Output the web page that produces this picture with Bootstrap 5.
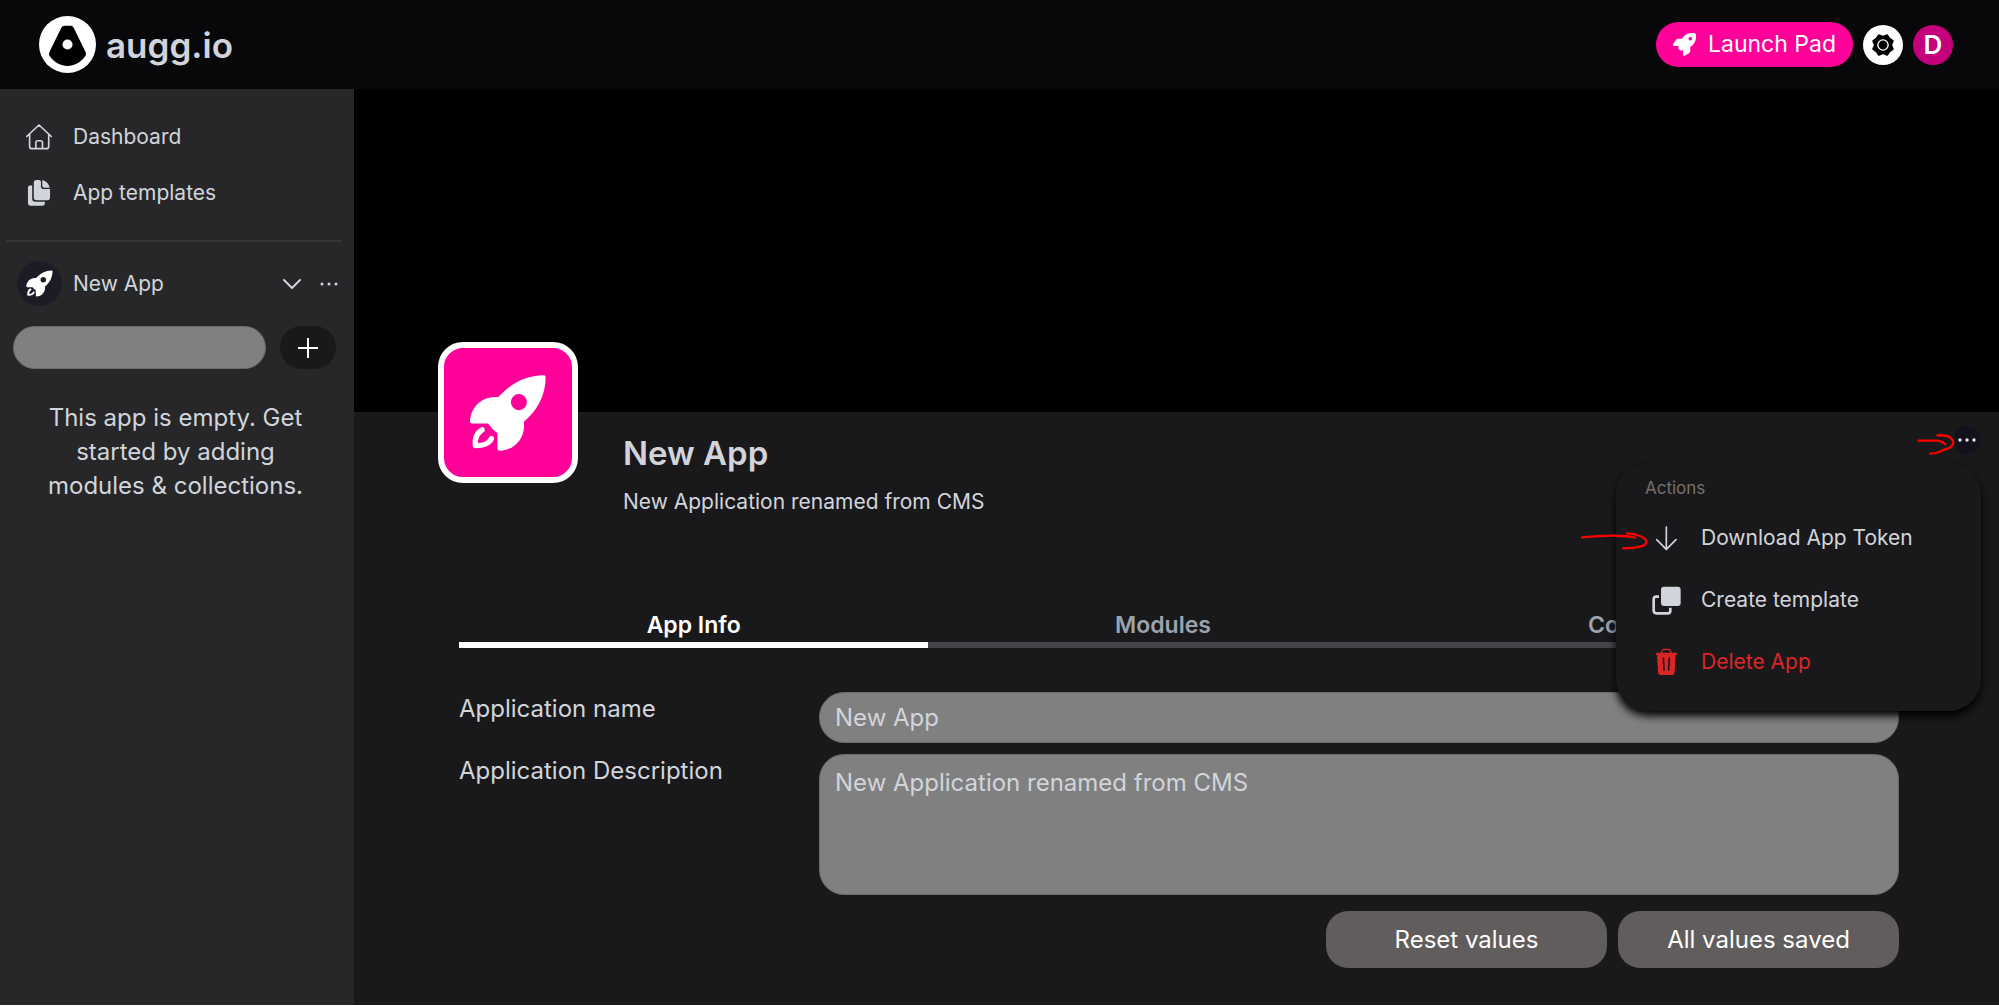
<!DOCTYPE html>
<html lang="en">
<head>
<meta charset="utf-8">
<meta name="viewport" content="width=device-width, initial-scale=1">
<title>augg.io – New App</title>
<link href="https://cdn.jsdelivr.net/npm/bootstrap@5.3.0/dist/css/bootstrap.min.css" rel="stylesheet">
<style>
  body { background: #19191b; color: #d1d5db; font-family: Inter, "Open Sans", sans-serif; font-size: 21px; line-height: 34px; border-bottom: 1px solid #fff; }
  svg { display: block; flex: none; }
  button { color: inherit; }
  .topbar { background: #08080a; height: 89px; padding: 0 46px 0 39px; }
  .brand { gap: 10px; }
  .brand-name { font-size: 35px; font-weight: 600; color: #d1d5db; }
  .top-actions { gap: 10px; }
  .launch { background: #ff0099; color: #fff; height: 45px; padding: 0 16px; gap: 12px; font-size: 23px; }
  .launch:hover { background: #e0008a; color: #fff; }
  .round-btn { width: 40px; height: 40px; }
  .avatar { background: #c4007a; font-size: 26px; font-weight: 600; }

  .sidebar { width: 354px; background: #272729; padding: 20px 12px 0 13px; }
  .side-link { height: 56px; padding-left: 13px; gap: 21px; color: #d1d5db; }
  .side-rule { height: 2px; background: #353537; margin: 19px 0 19px -7px; }
  .app-row { height: 45px; padding: 0 4px 0 4px; gap: 11px; }
  .app-dot { width: 45px; height: 45px; background: #1d1b26; }
  .search-row { gap: 14px; margin-top: 20px; padding-right: 6px; }
  .pill-input { background: #808080; border: 1px solid #6a6a6a; height: 43px; border-radius: 22px; }
  .add-btn { width: 56px; height: 43px; background: #19191b; border-radius: 22px; }
  .empty-note { font-size: 24px; padding: 0 32px 0 28px; margin-top: 32px; }

  .banner { background: #000; height: 323px; }
  .profile { padding-left: 84px; gap: 45px; }
  .app-icon { width: 140px; height: 141px; margin-top: -70px; background: #ff0099; border: 6px solid #fff; border-radius: 25px; }
  .app-title { font-size: 33px; font-weight: 600; line-height: 40px; margin: 21px 0 14px; }
  .app-sub { line-height: 30px; margin: 0; }
  .content { padding: 94px 100px 35px 105px; }
  .tab-strip { padding-right: 32px; }
  .tab-btn { flex: 1 1 0; font-size: 23px; font-weight: 600; line-height: 28px; padding: 0 0 3px; color: #9ca3af; border: 0; border-bottom: 6px solid #44444a; border-radius: 0; }
  .btn.tab-btn.active { color: #fff; border-color: #fff; }
  .settings { margin-top: 44px; font-size: 24px; }
  .field-row { margin-bottom: 11px; }
  .field { background: #808080; border: 1px solid #6a6a6a; border-radius: 25px; color: #d1d5db; font-size: 24px; line-height: 33px; padding: 8px 15px; }
  .field:focus { background: #808080; color: #fff; }
  .field-area { height: 141px; padding-top: 11px; resize: none; }
  .form-btn { width: 281px; height: 57px; background: #615d5c; color: #fff; border-radius: 22px; font-size: 24px; border: 0; }
  .form-actions { margin-top: 16px; gap: 11px; }

  .more-wrap { top: 14px; right: 18px; }
  .more-btn { width: 28px; height: 28px; background: #13111c; }
  .action-menu { width: 365px; height: 248px; margin-top: 9px; background: #19191b; border-radius: 32px; box-shadow: 0 5px 8px #000; padding: 10px 0 0; z-index: 5; }
  .menu-head { font-size: 17px; line-height: 30px; color: #78716c; padding-left: 29px; margin-bottom: 4px; }
  .menu-item { height: 62px; padding-left: 36px; gap: 20px; color: #d1d5db; }
  .menu-item.danger { color: #dc2626; }
  .pen { top: 18px; right: 42px; z-index: 6; pointer-events: none; }
</style>
</head>
<body class="d-flex flex-column min-vh-100">
<svg width="0" height="0" class="position-absolute" aria-hidden="true">
  <symbol id="rocket" viewBox="118 114 233 233">
    <path fill="currentColor" fill-rule="evenodd" d="M342 118C285 118 240 145 206 183C155 178 122 215 121 257Q121 262 127 262H175Q186 279 203 291V337Q203 343 209 343C255 342 287 305 282 257C320 225 347 180 347 124Q347 118 342 118ZM267 174a24 24 0 1 1 0 48a24 24 0 1 1 0-48Z"/>
    <path fill="none" stroke="currentColor" stroke-width="16" stroke-linecap="round" stroke-linejoin="round" d="M157 281C140 291 135 309 137 328C158 329 178 322 185 307"/>
  </symbol>
</svg>

<header class="topbar d-flex align-items-center justify-content-between">
  <a href="#" class="brand d-flex align-items-center text-decoration-none">
    <svg width="57" height="57" viewBox="117 46 170 170" aria-hidden="true"><circle cx="202" cy="131" r="85" fill="#fff"/><path d="M192 75H212Q217 75 220 80L256 153Q259 161 254 167C228 204 176 204 150 167Q145 161 148 153L184 80Q187 75 192 75Z"/><circle cx="202" cy="131" r="15" fill="#fff"/></svg>
    <span class="brand-name">augg.io</span>
  </a>
  <div class="top-actions d-flex align-items-center">
    <button class="btn launch rounded-pill d-flex align-items-center">
      <svg width="23" height="23" viewBox="0 0 512 512" fill="currentColor" aria-hidden="true"><path d="M156.600 384.900L125.700 354c-8.500-8.500-11.500-20.800-7.700-32.200c3-8.900 7-20.500 11.800-33.800L24 288c-8.600 0-16.600-4.600-20.900-12.100s-4.200-16.700 .2-24.100l52.500-88.500c13-21.900 36.500-35.300 61.900-35.300l82.300 0c2.400-4 4.800-7.700 7.200-11.300C289.100-4.100 411.100-8.100 483.900 5.300c11.600 2.100 20.600 11.200 22.800 22.800c13.400 72.900 9.300 194.800-111.400 276.700c-3.500 2.400-7.300 4.800-11.300 7.200v82.300c0 25.400-13.400 49-35.300 61.900l-88.500 52.500c-7.400 4.400-16.600 4.500-24.100 .2s-12.100-12.200-12.100-20.900V380.800c-14.100 4.900-26.400 8.900-35.700 11.900c-11.200 3.600-23.400 .5-31.800-7.800zM384 168a40 40 0 1 0 0-80 40 40 0 1 0 0 80z"/></svg>
      Launch Pad
    </button>
    <button class="btn round-btn rounded-circle bg-white p-0 d-flex align-items-center justify-content-center" aria-label="Theme">
      <svg width="24" height="24" viewBox="-35 -35 70 70" aria-hidden="true"><path stroke="#000" stroke-width="5" stroke-linejoin="round" d="M29 12L19 19L12 29L0 24L-12 29L-19 19L-29 12L-24 0L-29 -12L-19 -19L-12 -29L0 -24L12 -29L19 -19L29 -12L24 0Z"/><circle r="15" fill="none" stroke="#fff" stroke-width="4"/></svg>
    </button>
    <button class="btn round-btn avatar rounded-circle text-white p-0 lh-1">D</button>
  </div>
</header>

<div class="d-flex flex-grow-1">
  <nav class="sidebar flex-shrink-0">
    <a href="#" class="side-link d-flex align-items-center text-decoration-none">
      <svg width="26" height="26" viewBox="18 40 79 79" fill="none" stroke="currentColor" stroke-width="5" stroke-linecap="round" stroke-linejoin="round" aria-hidden="true"><path d="M20 78L57.500 43L95 78M29 71V108Q29 115 36 115H80Q87 115 87 108V71M48 115V97Q48 91 54 91H62Q68 91 68 97V115"/></svg>
      Dashboard
    </a>
    <a href="#" class="side-link d-flex align-items-center text-decoration-none">
      <svg width="26" height="26" viewBox="18 209 80 80" fill="currentColor" aria-hidden="true"><path d="M42 217Q42 209 50 209H58Q64 209 64 215V228Q64 237 73 237H92V262Q92 271 84 271H50Q42 271 42 262ZM68 209Q88 216 91 233H75Q68 233 68 226ZM24 232Q24 226 30 226H37V266Q37 276 47 276H76V280Q76 288 68 288H32Q24 288 24 280Z"/></svg>
      App templates
    </a>
    <div class="side-rule"></div>
    <div class="app-row d-flex align-items-center">
      <span class="app-dot rounded-circle text-white d-flex align-items-center justify-content-center flex-shrink-0"><svg width="27" height="27" aria-hidden="true"><use href="#rocket"/></svg></span>
      <span class="flex-grow-1">New App</span>
      <button class="btn border-0 p-0" aria-label="Expand"><svg width="18" height="12" viewBox="0 0 18 12" fill="none" stroke="#d1d5db" stroke-width="2" stroke-linecap="round" stroke-linejoin="round"><path d="M1 2L9 10L17 2"/></svg></button>
      <button class="btn border-0 p-0 ms-2" aria-label="More"><svg width="18" height="6" viewBox="0 0 18 6" fill="#d1d5db"><circle cx="2" cy="3" r="1.500"/><circle cx="9" cy="3" r="1.500"/><circle cx="16" cy="3" r="1.500"/></svg></button>
    </div>
    <div class="search-row d-flex">
      <input type="text" class="form-control pill-input" aria-label="Search modules">
      <button class="btn add-btn p-0 border-0 d-flex align-items-center justify-content-center flex-shrink-0" aria-label="Add"><svg width="20" height="20" viewBox="0 0 20 20" stroke="#fff" stroke-width="2"><path d="M10 0V20M0 10H20"/></svg></button>
    </div>
    <p class="empty-note text-center mb-0">This app is empty. Get started by adding modules &amp; collections.</p>
  </nav>

  <main class="flex-grow-1">
    <div class="banner"></div>
    <section class="position-relative">
      <div class="profile d-flex align-items-start">
        <div class="app-icon text-white d-flex align-items-center justify-content-center position-relative flex-shrink-0"><svg width="78" height="78" aria-hidden="true"><use href="#rocket"/></svg></div>
        <div>
          <h1 class="app-title">New App</h1>
          <p class="app-sub">New Application renamed from CMS</p>
        </div>
      </div>

      <div class="more-wrap position-absolute">
        <button class="btn more-btn rounded-circle border-0 p-0 d-flex align-items-center justify-content-center ms-auto" aria-label="Actions"><svg width="18" height="6" viewBox="0 0 18 6" fill="#e5e7eb"><circle cx="2" cy="3" r="1.700"/><circle cx="9" cy="3" r="1.700"/><circle cx="16" cy="3" r="1.700"/></svg></button>
        <div class="action-menu position-relative">
          <div class="menu-head">Actions</div>
          <a href="#" class="menu-item d-flex align-items-center text-decoration-none"><svg width="29" height="28" viewBox="277 369 87 84" fill="none" stroke="currentColor" stroke-width="5" stroke-linecap="round" stroke-linejoin="round" aria-hidden="true"><path d="M320 378V445M291 416L320 445L349 416"/></svg>Download App Token</a>
          <a href="#" class="menu-item d-flex align-items-center text-decoration-none"><svg width="29" height="29" viewBox="277 553 87 87" aria-hidden="true"><rect x="304" y="555" width="59" height="58" rx="9" fill="currentColor"/><path fill="none" stroke="currentColor" stroke-width="8" stroke-linejoin="round" d="M298 585H290Q282 585 282 593V626Q282 635 290 635H324Q332 635 332 627V618"/></svg>Create template</a>
          <a href="#" class="menu-item danger d-flex align-items-center text-decoration-none"><svg width="29" height="28" viewBox="277 741 87 84" fill="none" stroke="currentColor" aria-hidden="true"><path stroke-width="4" d="M306 757Q306 745 314 745H326Q334 745 334 757"/><path stroke-width="6" stroke-linecap="round" d="M291 758H350"/><path fill="currentColor" stroke="none" d="M292 760H348L345 812Q344 822 335 822H305Q296 822 295 812Z"/><path stroke="#19191b" stroke-width="5" stroke-linecap="round" d="M311 771L313 807M329 771L327 807"/></svg>Delete App</a>
        </div>
      </div>
      <svg class="pen position-absolute" width="377" height="123" viewBox="60 90 1131 369" fill="none" stroke="#f00" stroke-width="7" stroke-linecap="round" stroke-linejoin="round" aria-hidden="true"><path d="M1076 122H1135Q1148 124 1156 133M1132 106Q1160 104 1171 113Q1190 129 1168 144Q1152 148 1138 156Q1125 161 1111 161M66 412Q150 404 188 408Q210 408 225 413M201 400Q235 402 254 416Q266 428 250 437Q225 445 190 445"/></svg>

      <div class="content">
        <div class="tab-strip d-flex" role="tablist">
          <button class="btn tab-btn active" role="tab" aria-selected="true">App Info</button>
          <button class="btn tab-btn" role="tab">Modules</button>
          <button class="btn tab-btn" role="tab">Content</button>
        </div>
        <form class="settings">
          <div class="row g-0 field-row">
            <label for="appName" class="col-3">Application name</label>
            <div class="col-9"><input id="appName" type="text" class="form-control field" value="New App"></div>
          </div>
          <div class="row g-0">
            <label for="appDesc" class="col-3">Application Description</label>
            <div class="col-9"><textarea id="appDesc" class="form-control field field-area">New Application renamed from CMS</textarea></div>
          </div>
          <div class="form-actions d-flex justify-content-end">
            <button type="button" class="btn form-btn">Reset values</button>
            <button type="button" class="btn form-btn">All values saved</button>
          </div>
        </form>
      </div>
    </section>
  </main>
</div>
<script src="https://cdn.jsdelivr.net/npm/bootstrap@5.3.0/dist/js/bootstrap.bundle.min.js"></script>
</body>
</html>
